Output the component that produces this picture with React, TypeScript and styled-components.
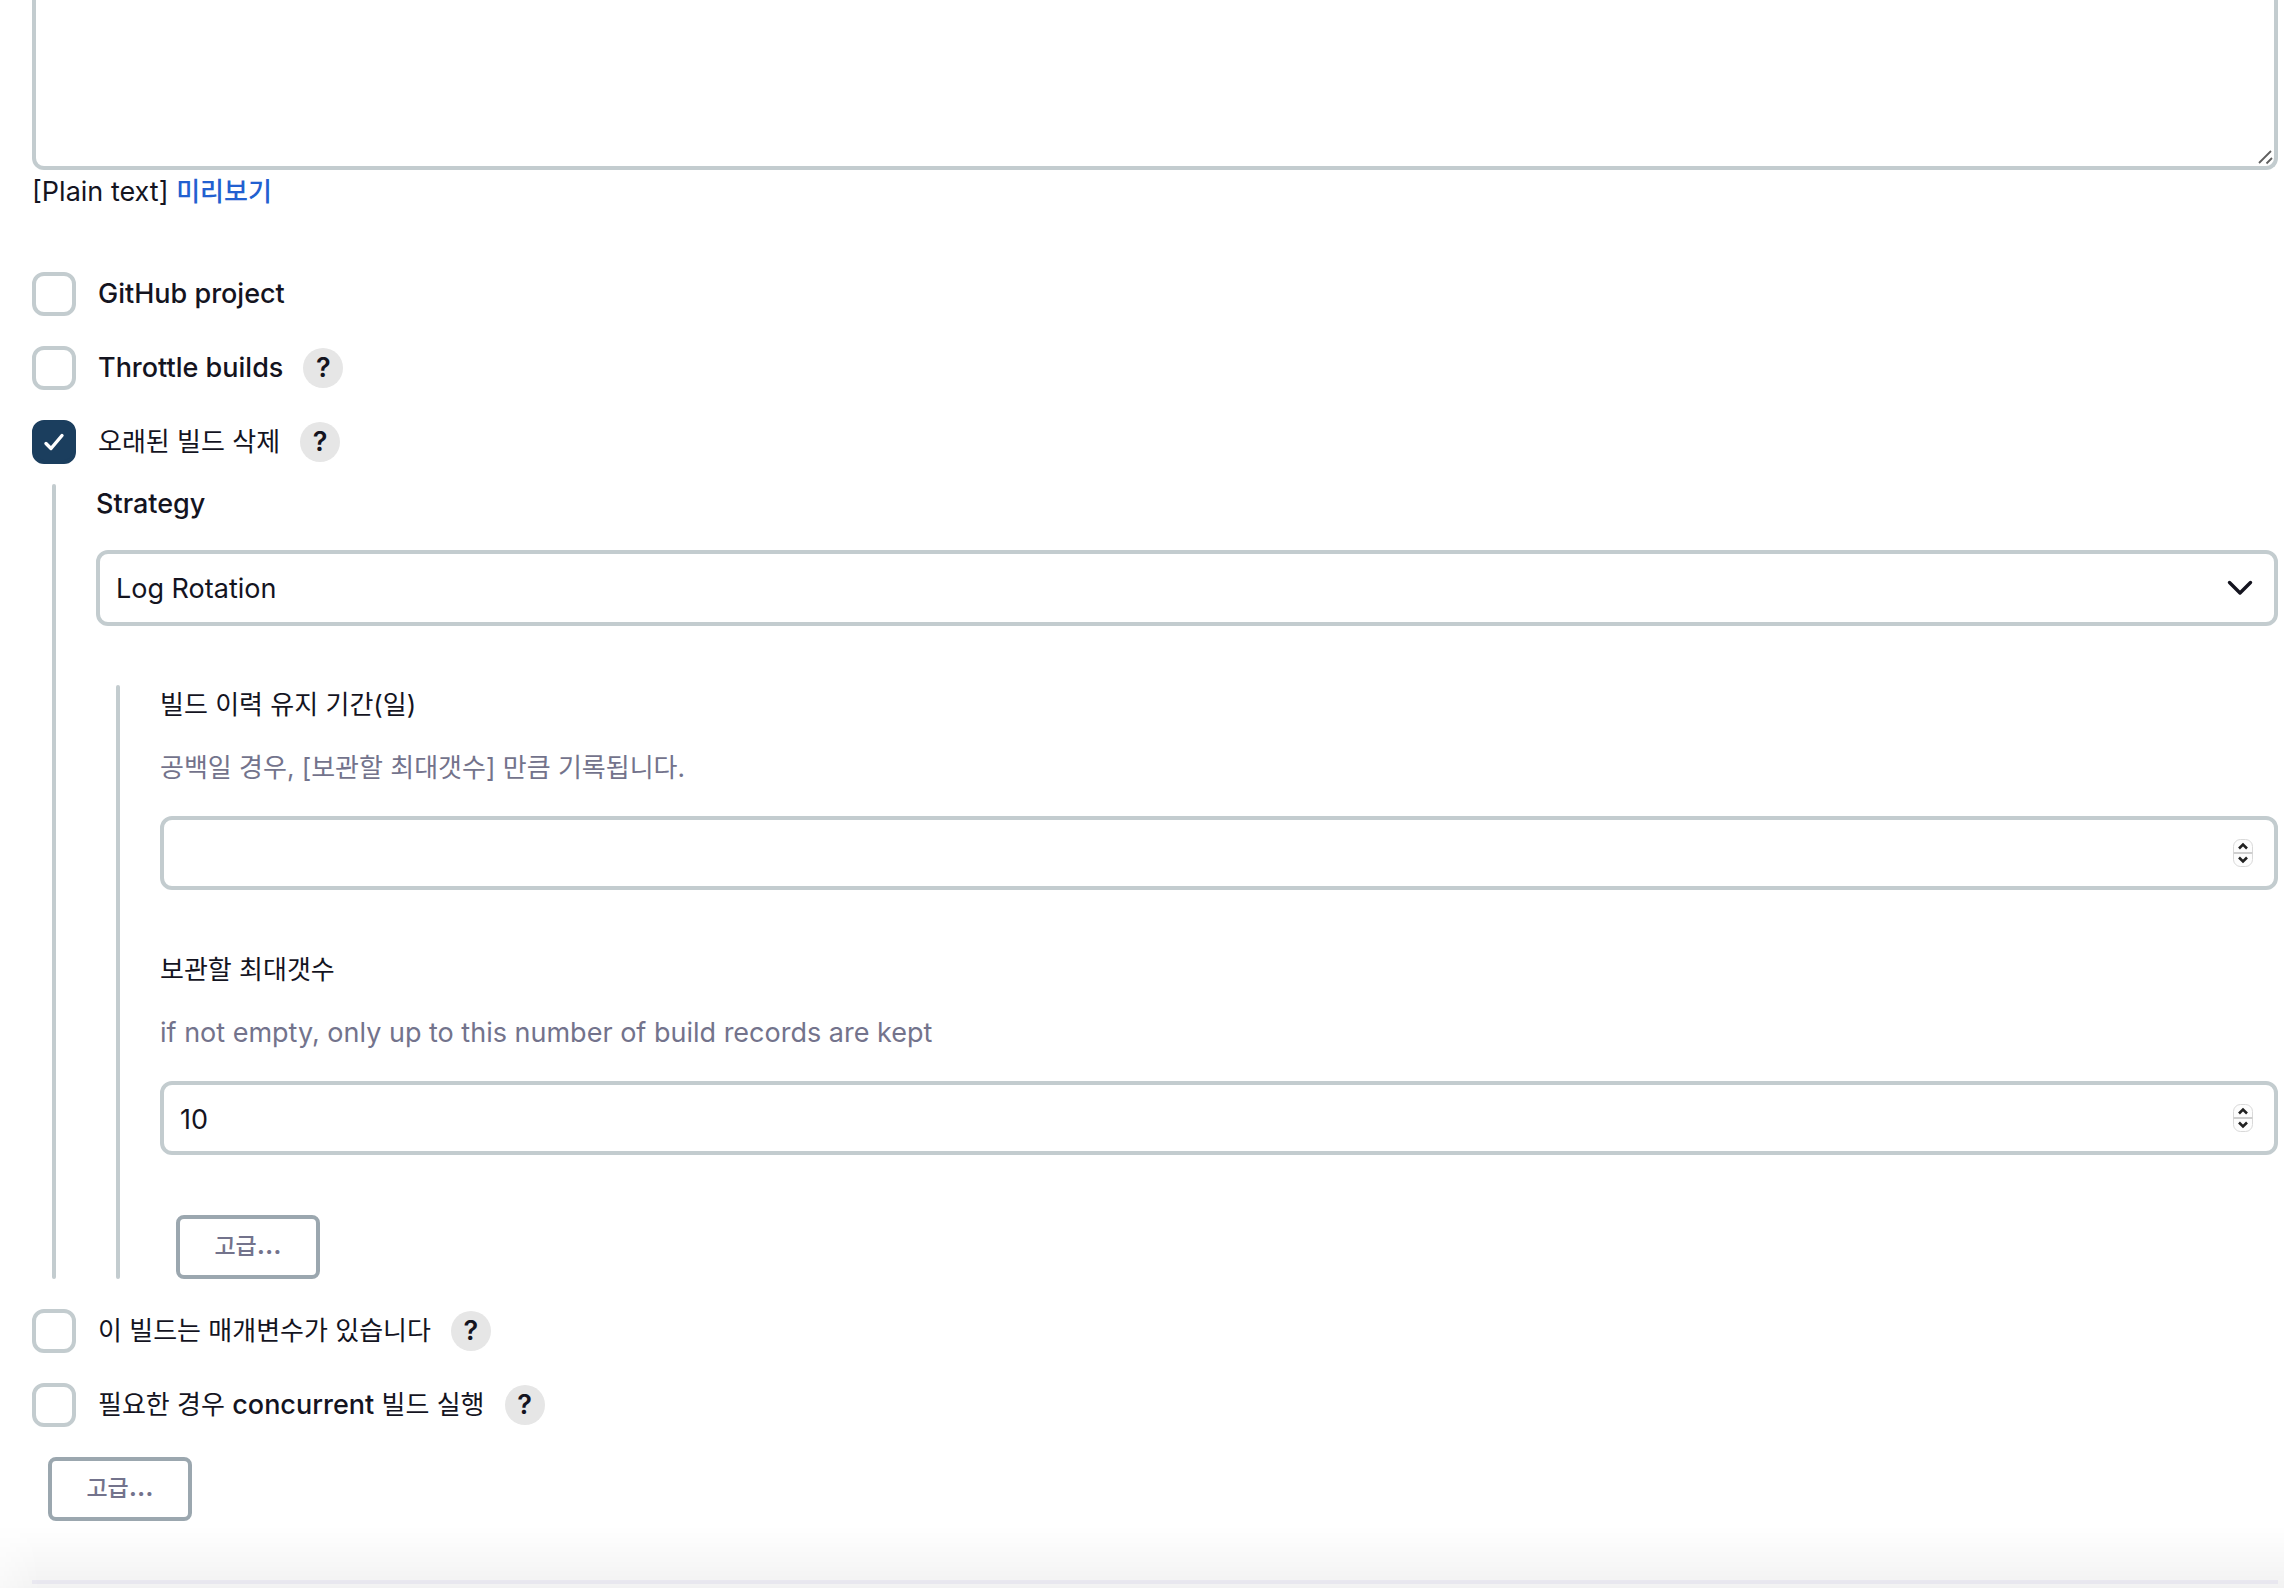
import React, { useId, useState } from "react";
import styled, { createGlobalStyle } from "styled-components";

const color = {
  text: "#14141f",
  secondary: "#73738c",
  border: "#c3cccf",
  buttonBorder: "#9ba7af",
  link: "#2260d0",
  checked: "#1b3e5e",
  help: "#e6e6e6",
};

const GlobalStyle = createGlobalStyle`
  *, *::before, *::after { box-sizing: border-box; }
  body {
    margin: 0;
    background: #fff;
    color: ${color.text};
    font-family: Inter, "Noto Sans CJK KR", sans-serif;
    font-size: 27px;
    line-height: 40px;
  }
  button, input, select, textarea { font: inherit; color: inherit; margin: 0; }
`;

const Page = styled.form`
  padding: 0 6px 4px 32px;
`;

const Relative = styled.div`
  position: relative;
  display: flex;
`;

const Description = styled.textarea`
  display: block;
  width: 100%;
  height: 170px;
  padding: 16px;
  border: 4px solid ${color.border};
  border-top: 0;
  border-radius: 0 0 12px 12px;
  background: #fff;
  resize: none;
  outline: none;
`;

const ResizeGrip = styled.svg`
  position: absolute;
  right: 5px;
  bottom: 5px;
  pointer-events: none;
`;

const Caption = styled.p`
  margin: 0 0 60px;
  padding-top: 2px;
`;

const Ko = styled.span`
  font-size: 26px;
  font-weight: 400;
  line-height: 1;
`;

const PreviewLink = styled.a`
  color: ${color.link};
  text-decoration: none;
  ${Ko} { font-weight: 500; }
`;

const Options = styled.div`
  display: flex;
  flex-direction: column;
  gap: 30px;
`;

const OptionRow = styled.div`
  display: flex;
  align-items: center;
  height: 44px;
`;

const CheckLabel = styled.label`
  display: flex;
  align-items: center;
  gap: 22px;
  font-weight: 500;
  white-space: nowrap;
`;

const CheckFrame = styled.span`
  position: relative;
  display: flex;
`;

const Checkbox = styled.input`
  appearance: none;
  width: 44px;
  height: 44px;
  border: 4px solid ${color.border};
  border-radius: 12px;
  background: #fff;
  &:checked {
    border-color: ${color.checked};
    background: ${color.checked};
  }
`;

const CheckMark = styled.svg`
  position: absolute;
  inset: 0;
  pointer-events: none;
`;

const Help = styled.button`
  width: 40px;
  height: 40px;
  margin-left: 20px;
  padding: 0;
  border: 0;
  border-radius: 50%;
  background: ${color.help};
  font-weight: 600;
`;

const Nested = styled.div<{ $indent: number }>`
  display: flex;
  flex-direction: column;
  margin-left: 20px;
  padding-left: ${(p) => p.$indent}px;
  position: relative;
  &::before {
    content: "";
    position: absolute;
    left: 0;
    top: 0;
    bottom: 0;
    width: 4px;
    border-radius: 2px;
    background: ${color.border};
  }
`;

const NestedGroup = styled.div`
  margin-top: -10px;
`;

const FieldLabel = styled.label`
  display: block;
  font-weight: 500;
`;

const Hint = styled.p`
  margin: 23px 0 28px;
  color: ${color.secondary};
`;

const StrategyField = styled.div`
  margin-bottom: 59px;
`;

const Select = styled.select`
  appearance: none;
  width: 100%;
  height: 76px;
  margin-top: 26px;
  padding: 2px 16px 0;
  border: 4px solid ${color.border};
  border-radius: 12px;
  background: #fff;
  outline: none;
`;

const Chevron = styled.svg`
  position: absolute;
  right: 24px;
  bottom: 29px;
  pointer-events: none;
`;

const Field = styled.div`
  margin-bottom: 60px;
`;

const NumberInput = styled.input`
  appearance: textfield;
  width: 100%;
  height: 74px;
  padding: 2px 16px 0;
  border: 4px solid ${color.border};
  border-radius: 12px;
  background: #fff;
  outline: none;
  &::-webkit-inner-spin-button,
  &::-webkit-outer-spin-button {
    appearance: none;
    margin: 0;
  }
`;

const Stepper = styled.svg`
  position: absolute;
  right: 22px;
  bottom: 21px;
  pointer-events: none;
`;

const AdvancedButton = styled.button`
  align-self: flex-start;
  width: 144px;
  height: 64px;
  margin-left: 16px;
  padding: 0 0 4px;
  border: 4px solid ${color.buttonBorder};
  border-radius: 8px;
  background: #fff;
  color: ${color.secondary};
  font-size: 26px;
  font-weight: 600;
`;

const ButtonKo = styled.span`
  font-size: 23px;
  font-weight: 500;
  line-height: 1;
`;

const Divider = styled.hr`
  height: 4px;
  margin: 59px 0 0;
  border: 0;
  background: #f4f3fb;
`;

const BottomShade = styled.div`
  position: fixed;
  left: 0;
  right: 0;
  bottom: 0;
  height: 62px;
  background: linear-gradient(rgba(0, 0, 0, 0), rgba(0, 0, 0, 0.05));
  mask-image: linear-gradient(to right, rgba(0, 0, 0, 0.5), #000 40px);
  pointer-events: none;
`;

function Option({ children, help, checked = false }: { children: React.ReactNode; help?: boolean; checked?: boolean }) {
  const [on, setOn] = useState(checked);
  return (
    <OptionRow>
      <CheckLabel>
        <CheckFrame>
          <Checkbox type="checkbox" checked={on} onChange={(e) => setOn(e.target.checked)} />
          {on && (
            <CheckMark width="44" height="44" viewBox="0 0 44 44" fill="none" aria-hidden="true">
              <path d="M14 23.5L19 28.5L30 15.5" stroke="#fff" strokeWidth="3.4" strokeLinecap="round" strokeLinejoin="round" />
            </CheckMark>
          )}
        </CheckFrame>
        <span>{children}</span>
      </CheckLabel>
      {help && <Help type="button">?</Help>}
    </OptionRow>
  );
}

function NumberField({ label, hint, value = "" }: { label: React.ReactNode; hint: React.ReactNode; value?: string }) {
  const id = useId();
  return (
    <Field>
      <FieldLabel htmlFor={id}>{label}</FieldLabel>
      <Hint>{hint}</Hint>
      <Relative>
        <NumberInput id={id} type="number" defaultValue={value} />
        <Stepper width="26" height="32" viewBox="0 0 26 32" fill="none" aria-hidden="true">
          <rect x="3.5" y="2.5" width="19" height="27" rx="7" fill="#fdfdfd" stroke="#d9d9d9" />
          <path d="M3.5 16H22.5" stroke="#cfcfcf" strokeWidth="2" />
          <path d="M9 11.5L13 7.5L17 11.5M9 20.5L13 24.5L17 20.5" stroke="#222" strokeWidth="2.6" />
        </Stepper>
      </Relative>
    </Field>
  );
}

function Advanced() {
  return (
    <AdvancedButton type="button">
      <ButtonKo>고급</ButtonKo>...
    </AdvancedButton>
  );
}

export default function App() {
  return (
    <>
      <GlobalStyle />
      <Page>
        <Relative>
          <Description aria-label="Description" />
          <ResizeGrip width="16" height="16" viewBox="0 0 16 16" fill="none" aria-hidden="true">
            <path d="M2 14L14 2M9.5 14.5L15 9" stroke="#5f5f5f" strokeWidth="1.8" />
          </ResizeGrip>
        </Relative>
        <Caption>
          [Plain text]{" "}
          <PreviewLink href="#preview">
            <Ko>미리보기</Ko>
          </PreviewLink>
        </Caption>
        <Options>
          <Option>GitHub project</Option>
          <Option help>Throttle builds</Option>
          <Option help checked>
            <Ko>오래된 빌드 삭제</Ko>
          </Option>
          <NestedGroup>
            <Nested $indent={44}>
              <StrategyField>
                <FieldLabel htmlFor="strategy">Strategy</FieldLabel>
                <Relative>
                  <Select id="strategy">
                    <option>Log Rotation</option>
                  </Select>
                  <Chevron width="28" height="18" viewBox="0 0 28 18" fill="none" aria-hidden="true">
                    <path d="M3.5 3.5L14 14L24.5 3.5" stroke={color.text} strokeWidth="3.4" strokeLinecap="round" strokeLinejoin="round" />
                  </Chevron>
                </Relative>
              </StrategyField>
              <Nested $indent={44}>
                <NumberField
                  label={<Ko>빌드 이력 유지 기간(일)</Ko>}
                  hint={<Ko>공백일 경우, [보관할 최대갯수] 만큼 기록됩니다.</Ko>}
                />
                <NumberField
                  label={<Ko>보관할 최대갯수</Ko>}
                  hint="if not empty, only up to this number of build records are kept"
                  value="10"
                />
                <Advanced />
              </Nested>
            </Nested>
          </NestedGroup>
          <Option help>
            <Ko>이 빌드는 매개변수가 있습니다</Ko>
          </Option>
          <Option help>
            <Ko>필요한 경우 </Ko>concurrent<Ko> 빌드 실행</Ko>
          </Option>
          <Advanced />
        </Options>
        <Divider />
      </Page>
      <BottomShade />
    </>
  );
}
